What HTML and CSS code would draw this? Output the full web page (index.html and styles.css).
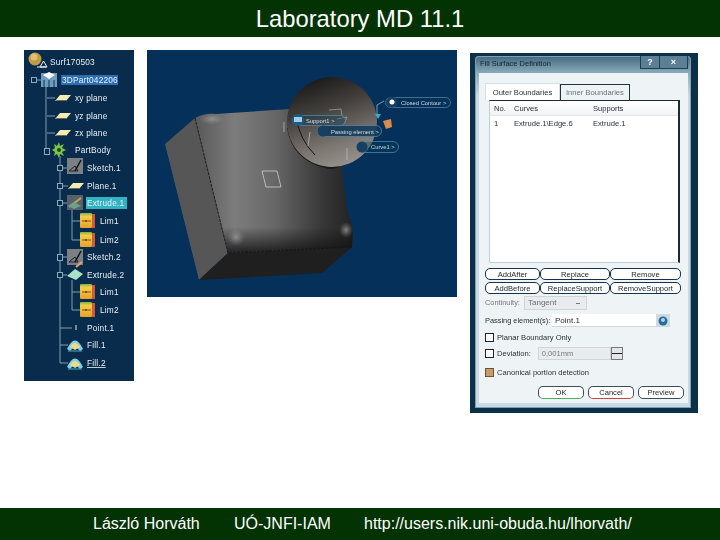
FILE: index.html
```html
<!DOCTYPE html>
<html lang="hu">
<head>
<meta charset="utf-8">
<title>Laboratory MD 11.1</title>
<link rel="stylesheet" href="styles.css">
</head>
<body>
<div class="slide">
  <header class="top">Laboratory MD 11.1</header>
  <main class="stage">
    <svg class="tree" width="110" height="331" viewBox="24 50 110 331">
      <defs>
        <linearGradient id="lim2" x1="0" y1="0" x2="0" y2="1">
          <stop offset="0" stop-color="#7fae4a"/><stop offset=".22" stop-color="#f2cf45"/><stop offset="1" stop-color="#e5a22c"/>
        </linearGradient>
        <g id="plane"><path d="M0 8 L5 2 H16 L11 8 Z" fill="#f3ecb5"/><path d="M0 8 H11 L12 7 H2 Z" fill="#6a6a50"/></g>
        <g id="limit"><rect x="0" y="0" width="12" height="15" rx="1" fill="url(#lim2)"/><rect x="12" y="1" width="3" height="14" fill="#cf5a3a"/><path d="M2 8 H11" stroke="#8a4a1a"/><circle cx="6" cy="8" r="1" fill="#8a3a1a"/></g>
        <g id="sketch"><rect x="0" y="0" width="16" height="16" fill="#7a8084"/><path d="M2 13 L8 8 L11 13 Z" fill="none" stroke="#222"/><path d="M8 13 L14 2" stroke="#111" stroke-width="1.5"/></g>
        <g id="fill"><path d="M0 12 Q8 -5 16 12 L13 14 Q8 7 3 14 Z" fill="#7fcfe6"/><path d="M3 10 Q8 2 13 10 L8 13 Z" fill="#efd987"/><path d="M1 14 H15" stroke="#4fa8c8"/></g>
      </defs>
      <rect x="24" y="50" width="110" height="331" fill="#0a2c4c"/>
      <g class="tree-lines">
        <path d="M46 85 V150 M47 98 H55 M47 116 H55 M47 133 H55"/>
        <path d="M60 156 V363 M60 168 H67 M60 186 H68 M60 203 H67 M60 257 H67 M60 275 H67 M60 328 H72 M60 345 H68 M60 363 H68"/>
        <path d="M72 208 V240 M72 221 H80 M72 240 H80 M72 280 V310 M72 292 H80 M72 310 H80"/>
        <path d="M36 80 H41"/>
      </g>
      <g class="tree-box"><rect x="31.500" y="77.500" width="5" height="5"/><rect x="44.500" y="148.500" width="5" height="6"/><rect x="57.500" y="165.500" width="5" height="5"/><rect x="57.500" y="183.500" width="5" height="5"/><rect x="57.500" y="200.500" width="5" height="5"/><rect x="57.500" y="254.500" width="5" height="6"/><rect x="57.500" y="272.500" width="5" height="5"/></g>

      <circle cx="35" cy="59" r="6.500" fill="#c09a45"/><circle cx="34" cy="57" r="3.500" fill="#e0c070"/>
      <path d="M40 67 L43.500 61 L47 67 Z M37 67 H46" fill="none" stroke="#f2f2f2"/>
      <rect x="41" y="73" width="16" height="14" fill="#6d9dc0"/><path d="M43 75 L49 72 L55 75 L49 79 Z" fill="#fff"/><path d="M44 80 V87 M49 80 V87 M54 80 V87" stroke="#12344f"/>

      <use href="#plane" x="55" y="93"/><use href="#plane" x="55" y="111"/><use href="#plane" x="55" y="128"/>
      <path d="M59 142 L60 146 L64 144 L62 148 L66 150 L62 152 L64 156 L60 154 L59 158 L57 154 L54 156 L55 152 L52 150 L55 148 L54 144 L57 146 Z" fill="#7fc24a"/><circle cx="59" cy="150" r="2" fill="#1a4a20"/>
      <use href="#sketch" x="67" y="158"/><use href="#plane" x="68" y="181"/>
      <rect x="67" y="195" width="16" height="15" fill="#56626a"/><path d="M69 207 L81 198" stroke="#c9a24a" stroke-width="2"/><path d="M68 206 L74 202 L81 206 L74 209 Z" fill="#6f9f8a"/>
      <use href="#limit" x="80" y="213"/><use href="#limit" x="80" y="232"/>
      <use href="#sketch" x="67" y="249"/>
      <path d="M67 276 L75 269 L83 274 L76 280 Z" fill="#a8e0c8"/><path d="M76 267 L82 262" stroke="#f0a060" stroke-width="2"/>
      <use href="#limit" x="80" y="284"/><use href="#limit" x="80" y="302"/>
      <path d="M76 325 V330" stroke="#dce6ee"/>
      <use href="#fill" x="67" y="337"/><use href="#fill" x="67" y="355"/>

      <rect x="61" y="75" width="57" height="10" fill="#2d6eb2"/>
      <rect x="86" y="197" width="41" height="12" fill="#2fb4c4"/>
      <g class="tree-text">
        <text x="50" y="65">Surf170503</text>
        <text x="62" y="83">3DPart042206</text>
        <text x="75" y="101">xy plane</text>
        <text x="75" y="119">yz plane</text>
        <text x="75" y="136">zx plane</text>
        <text x="75" y="153">PartBody</text>
        <text x="87" y="171">Sketch.1</text>
        <text x="87" y="189">Plane.1</text>
        <text x="87" y="206">Extrude.1</text>
        <text x="100" y="224">Lim1</text>
        <text x="100" y="243">Lim2</text>
        <text x="87" y="260">Sketch.2</text>
        <text x="87" y="278">Extrude.2</text>
        <text x="100" y="295">Lim1</text>
        <text x="100" y="313">Lim2</text>
        <text x="87" y="331">Point.1</text>
        <text x="87" y="348">Fill.1</text>
        <text x="87" y="366" class="under">Fill.2</text>
      </g>
    </svg>

    <svg class="cad" width="310" height="247" viewBox="147 50 310 247">
      <defs>
        <linearGradient id="face" x1="0" y1="0" x2="1" y2="0">
          <stop offset="0" stop-color="#585858"/><stop offset=".25" stop-color="#7c7c7c"/><stop offset=".5" stop-color="#686868"/><stop offset=".8" stop-color="#383838"/><stop offset="1" stop-color="#222"/>
        </linearGradient>
        <linearGradient id="facelow" x1="0" y1="0" x2="0" y2="1">
          <stop offset="0" stop-color="#111" stop-opacity="0"/><stop offset=".82" stop-color="#111" stop-opacity="0"/><stop offset="1" stop-color="#111" stop-opacity=".85"/>
        </linearGradient>
        <linearGradient id="sphere" x1=".3" y1="0" x2=".65" y2="1">
          <stop offset="0" stop-color="#191919"/><stop offset=".35" stop-color="#433f3c"/><stop offset=".75" stop-color="#7d7873"/><stop offset="1" stop-color="#98928c"/>
        </linearGradient>
        <radialGradient id="bump" cx=".5" cy=".5" r=".5">
          <stop offset="0" stop-color="#a0a0a0" stop-opacity=".75"/><stop offset="1" stop-color="#808080" stop-opacity="0"/>
        </radialGradient>
        <filter id="soft"><feGaussianBlur stdDeviation=".35"/></filter>
      </defs>
      <rect x="147" y="50" width="310" height="247" fill="#05305a"/>
      <path d="M165 144 L195 118 L228 253 L199 280 Z" fill="#565656"/>
      <path d="M228 253 L199 280 L322 273 L352 247 Z" fill="#1f1f1f"/>
      <path id="front" d="M195 118 Q205 113 215 114 L290 109 L342 165 Q344 190 347 210 Q352 225 353 232 L352 247 Q290 250 228 253 Z" fill="url(#face)"/>
      <path d="M195 118 Q205 113 215 114 L290 109 L342 165 Q344 190 347 210 Q352 225 353 232 L352 247 Q290 250 228 253 Z" fill="url(#facelow)"/>
      <ellipse cx="212" cy="119" rx="13" ry="6" fill="url(#bump)"/>
      <ellipse cx="236" cy="237" rx="9" ry="9" fill="url(#bump)"/>
      <ellipse cx="346" cy="230" rx="7" ry="8" fill="url(#bump)"/>
      <path d="M195 118 L228 253 L352 247" class="edge"/>
      <path d="M262 171 H277 L281 187 H266 Z" class="sq"/>
      <path d="M287 128 Q292 160 325 168 Q338 172 344 160 L340 130 Z" fill="#1b1a19"/>
      <circle cx="332" cy="122" r="45" fill="url(#sphere)"/>
      <path d="M296 118 Q300 140 315 155" class="dk"/>
      <path d="M329 110 L341 109 L342 116 M337 119 L347 117 L344 124" class="thin"/>
      <g filter="url(#soft)">
        <path d="M284 122 V132 M310 132 L308 146 M347 148 V160 M377 105 V115 M384 101 L377 105" class="lead"/>
        <path d="M383 121 L391 119 L392 127 L386 129 Z" fill="#d98a50"/>
        <path d="M375 114 L381 114 L378 119 Z" fill="#2fb4c4"/>

        <rect x="292.500" y="115.500" width="53" height="10" rx="5" class="pill-dim"/>
        <circle cx="298" cy="120" r="6" fill="#1d5a80"/><rect x="294" y="117" width="8" height="5" fill="#9fd0e6"/>
        <rect x="317.500" y="125.500" width="64" height="11" rx="5.500" class="pill"/>
        <circle cx="323" cy="131" r="5.500" fill="#15405f"/>
        <rect x="357.500" y="141.500" width="41" height="11" rx="5.500" class="pill-dim"/>
        <circle cx="362" cy="147" r="5.500" fill="#15405f"/>
        <rect x="385.500" y="97.500" width="65" height="10" rx="5" class="pill-open"/>
        <circle cx="392" cy="102" r="5.500" fill="#15405f"/><circle cx="392" cy="102" r="2.500" fill="#fff"/>
        <text x="306" y="123" class="lbl">Support1 &gt;</text>
        <text x="331" y="133.500" class="lbl">Passing element &gt;</text>
        <text x="371" y="149" class="lbl">Curve1 &gt;</text>
        <text x="401" y="104.500" class="lbl">Closed Contour &gt;</text>
      </g>
    </svg>

    <section class="dialog">
      <div class="frame">
        <div class="title">
          <span class="title-text">Fill Surface Definition</span>
          <span class="win-btns"><span class="win-btn">?</span><span class="win-btn">×</span></span>
        </div>
        <div class="client">
          <div class="tabs">
            <span class="tab tab-on">Outer Boundaries</span>
            <span class="tab">Inner Boundaries</span>
          </div>
          <div class="table">
            <div class="thead"><span class="c1">No.</span><span class="c2">Curves</span><span class="c3">Supports</span></div>
            <div class="trow"><span class="c1">1</span><span class="c2">Extrude.1\Edge.6</span><span class="c3">Extrude.1</span></div>
          </div>
          <div class="btn-grid">
            <span class="btn">AddAfter</span><span class="btn">Replace</span><span class="btn">Remove</span>
            <span class="btn">AddBefore</span><span class="btn">ReplaceSupport</span><span class="btn">RemoveSupport</span>
          </div>
          <div class="cont"><span class="muted">Continuity:</span><span class="combo">Tangent<i class="caret"></i></span></div>
          <div class="pass"><span>Passing element(s):</span><span class="input">Point.1</span><svg class="pick" width="14" height="13" viewBox="0 0 14 13"><rect width="14" height="13" fill="#cfdbe3"/><circle cx="7" cy="7" r="4.500" fill="#2a6a9c"/><circle cx="7" cy="6" r="2" fill="#a8d8ee"/></svg></div>
          <div class="check c-planar"><i class="box"></i>Planar Boundary Only</div>
          <div class="check c-dev"><i class="box"></i>Deviation:<span class="spin">0,001mm</span><span class="spin-btn"></span></div>
          <div class="check c-canon"><i class="box box-on"></i>Canonical portion detection</div>
          <div class="actions">
            <span class="btn act ok">OK</span><span class="btn act cancel">Cancel</span><span class="btn act">Preview</span>
          </div>
        </div>
      </div>
    </section>
  </main>
  <footer class="bottom">
    <span class="f-name">László Horváth</span>
    <span class="f-org">UÓ-JNFI-IAM</span>
    <span class="f-url">http://users.nik.uni-obuda.hu/lhorvath/</span>
  </footer>
</div>
</body>
</html>
```

FILE: styles.css
```css
* { box-sizing: border-box; }
html, body { margin: 0; padding: 0; background: #fff; }
.slide {
  width: 720px; height: 540px; display: flex; flex-direction: column;
  font-family: "Liberation Sans", Arial, sans-serif; overflow: hidden;
}
.top {
  height: 37px; background: #033203; color: #fff; text-align: center;
  font-size: 23.8px; line-height: 37px; flex: none;
}
.stage {
  flex: 1; display: flex; align-items: flex-start; gap: 13px;
  padding: 13px 0 0 24px; min-height: 0;
}
.tree, .cad { display: block; flex: none; }
.tree { filter: blur(.35px); }
.tree-lines path { fill: none; stroke: #7f9db4; stroke-width: 1; }
.tree-box rect { fill: #0a2c4c; stroke: #8fa9bc; stroke-width: 1; }
.tree-text text { font-size: 8.3px; fill: #e8f0f4; letter-spacing: .2px; }
.tree-text .under { text-decoration: underline; }
.cad { filter: blur(.4px); }
.edge { fill: none; stroke: #111; stroke-width: .8; stroke-dasharray: 3 1; }
.sq { fill: none; stroke: #ddd; stroke-width: .7; }
.thin { fill: none; stroke: #ccc; stroke-width: .5; }
.dk { fill: none; stroke: #141414; stroke-width: 1; }
.lead { fill: none; stroke: #b8c4cc; stroke-width: .7; }
.pill { fill: #0f3a5a; fill-opacity: .85; stroke: #5f8aa6; stroke-width: .7; }
.pill-dim { fill: #0f3a5a; fill-opacity: .35; stroke: #5f8aa6; stroke-width: .7; }
.pill-open { fill: none; stroke: #5f8aa6; stroke-width: .7; }
.lbl { font-size: 5.8px; fill: #d2dce2; }

.dialog {
  flex: none; width: 228px; height: 360px; margin-top: 3px; background: #0b3048;
  padding: 3px 7px 5px 5px; filter: blur(.4px);
}
.frame {
  height: 100%; border-radius: 4px 4px 0 0;
  background: linear-gradient(#41687e 0, #8fb0c0 18px, #c9dae4 40px);
  padding: 0 3px 5px 4px; display: flex; flex-direction: column;
  box-shadow: inset 0 0 0 1px #7fa0b4;
}
.title { height: 17px; flex: none; display: flex; justify-content: space-between; align-items: flex-start; padding-left: 1px; }
.title-text { font-size: 7.5px; line-height: 15px; color: #14242e; }
.win-btns { display: flex; }
.win-btn {
  width: 20px; height: 13px; color: #fff; font-size: 9px; line-height: 12px; text-align: center;
  font-weight: bold; background: #5c8093; border: 1px solid #1c3d52; border-top: 0;
}
.win-btn + .win-btn { width: 28px; border-left: 0; }
.client { flex: 1; background: #eef3f6; padding: 10px 8px 0 6px; position: relative; font-size: 7.6px; color: #2c3033; min-height: 0; white-space: nowrap; }
.tabs { display: flex; height: 17px; }
.tab { padding: 3px 5px 0; border: 1px solid #22353f; color: #6c7276; margin-top: 1px; border-bottom: 0; }
.tab-on { width: 75px; margin-top: 0; color: #2c3033; background: #fff; border-color: #d8e0e4; padding: 4px 0 0; text-align: center; }
.table { height: 163px; background: #fff; border: 1px solid #c2ccd2; border-right: 2px solid #1c2a32; margin: 0 0 0 4px; border-top-color: #1c2a32; }
.thead, .trow { display: flex; height: 15px; line-height: 15px; padding-left: 4px; }
.thead { background: linear-gradient(#fff, #f1f3f5); border-bottom: 1px solid #e5e8ea; }
.c1 { width: 20px; }
.c2 { width: 79px; }
.btn {
  display: flex; align-items: center; justify-content: center; background: #fff;
  border: 1px solid #17324a; border-radius: 5px; font-size: 7.6px; color: #24282a; white-space: nowrap; overflow: hidden;
}
.btn-grid { display: grid; grid-template-columns: 55px 70px 71px; grid-template-rows: 12px 12px; row-gap: 2px; margin: 5px 0 0 0; }
.cont { display: flex; height: 15px; margin-top: 1px; align-items: center; }
.muted { color: #777; width: 39px; font-size: 7.4px; white-space: nowrap; overflow: hidden; }
.combo { width: 63px; height: 14px; background: #e9ecee; border: 1px solid #cfd5d9; color: #6a6e72; padding: 1px 3px; position: relative; font-size: 8px; }
.caret { position: absolute; right: 6px; top: 6px; width: 4px; height: 1px; background: #777; }
.pass { display: flex; align-items: center; height: 14px; margin-top: 3px; font-size: 7.4px; white-space: nowrap; }
.pass > span:first-child { width: 67px; overflow: hidden; }
.input { width: 104px; height: 13px; background: #fff; padding: 2px 3px; font-size: 8px; border-bottom: 1px solid #d0d6da; }
.pick { display: block; flex: none; }
.check { display: flex; align-items: center; height: 11px; }
.c-planar { margin-top: 5px; }
.c-dev { margin-top: 5px; }
.c-canon { margin-top: 8px; }
.box { width: 9px; height: 9px; border: 1px solid #222; background: #fff; margin-right: 3px; flex: none; }
.box-on { background: #c79a6c; border-color: #6e5238; }
.spin { width: 73px; height: 13px; margin-left: 7px; background: #e9ecee; border: 1px solid #cfd5d9; color: #777; padding: 1px 3px; }
.spin-btn { width: 12px; height: 13px; background: linear-gradient(#e4e7e9 45%, #222 45%, #222 55%, #e4e7e9 55%); border: 1px solid #777; }
.actions { display: flex; gap: 4px; position: absolute; left: 59px; top: 313px; }
.act { width: 46px; height: 13px; border-color: #3b4d58; }
.ok { border-bottom-color: #4fae5a; }
.cancel { border-bottom-color: #c8483c; }

.bottom {
  height: 32px; background: #033203; color: #fff; flex: none; display: flex; align-items: center;
  padding-left: 93px; font-size: 16px;
}
.f-name { width: 141px; }
.f-org { width: 130px; }
```
